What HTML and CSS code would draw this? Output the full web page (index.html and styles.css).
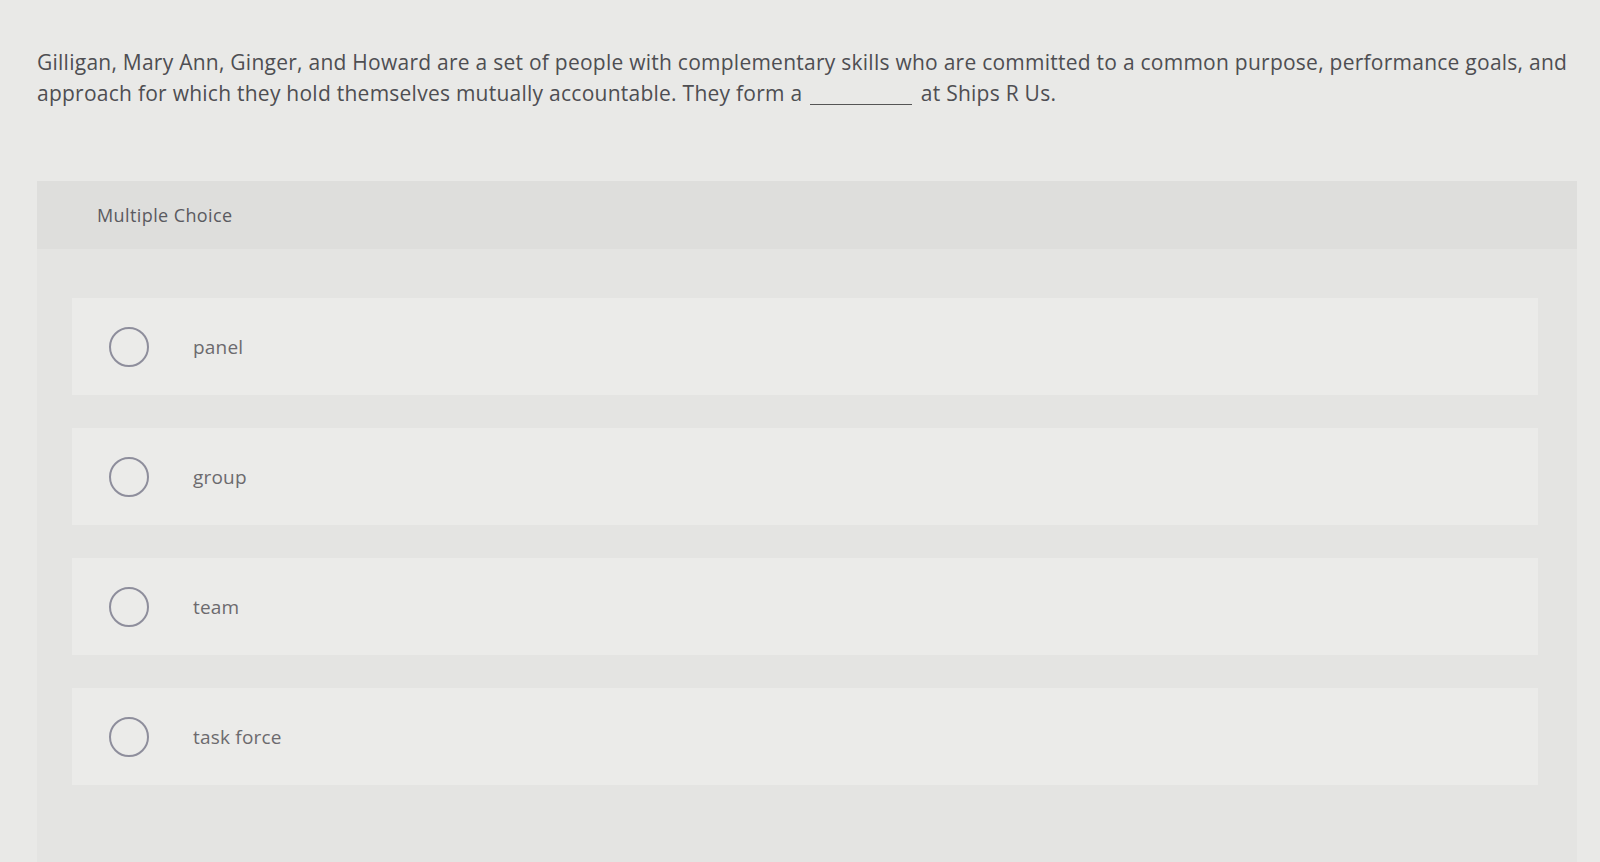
FILE: index.html
```html
<!DOCTYPE html>
<html lang="en">
<head>
<meta charset="utf-8">
<title>Multiple Choice</title>
<link rel="stylesheet" href="styles.css">
</head>
<body>
<div class="page">
  <p class="question">Gilligan, Mary Ann, Ginger, and Howard are a set of people with complementary skills who are committed to a common purpose, performance goals, and approach for which they hold themselves mutually accountable. They form a <span class="blank"></span> at Ships R Us.</p>
  <section class="card">
    <header class="card-head">Multiple Choice</header>
    <div class="options">
      <label class="option"><span class="radio"></span><span class="opt-text">panel</span></label>
      <label class="option"><span class="radio"></span><span class="opt-text">group</span></label>
      <label class="option"><span class="radio"></span><span class="opt-text">team</span></label>
      <label class="option"><span class="radio"></span><span class="opt-text">task force</span></label>
    </div>
  </section>
</div>
</body>
</html>
```
FILE: styles.css
```css
html, body {
  margin: 0;
  padding: 0;
}
body {
  background: #e9e9e7;
  font-family: "Open Sans", "Liberation Sans", sans-serif;
  height: 862px;
  overflow: hidden;
}
.page {
  padding: 0 24px 0 37px;
}
.question {
  margin: 0;
  padding-top: 47px;
  font-size: 21px;
  letter-spacing: 0.25px;
  line-height: 31px;
  color: #4e4e52;
  width: 1545px;
}
.blank {
  display: inline-block;
  width: 102px;
  height: 1px;
  background: #555;
  vertical-align: -4px;
  margin: 0 3px 0 2px;
}
.card {
  margin-top: 72px;
  width: 1540px;
  background: #e4e4e2;
  min-height: 700px;
}
.card-head {
  height: 68px;
  display: flex;
  align-items: center;
  padding-left: 60px;
  background: #dededc;
  color: #5a5a60;
  font-size: 18px;
  letter-spacing: 0.4px;
}
.options {
  display: flex;
  flex-direction: column;
  gap: 33px;
  padding: 49px 39px 0 35px;
}
.option {
  display: flex;
  align-items: center;
  height: 97px;
  background: #ebebe9;
  padding-left: 37px;
}
.radio {
  width: 36px;
  height: 36px;
  border: 2px solid #8e8e9c;
  border-radius: 50%;
  flex: none;
}
.opt-text {
  margin-left: 44px;
  font-size: 19px;
  letter-spacing: 0.2px;
  color: #6c6a6e;
}
```
